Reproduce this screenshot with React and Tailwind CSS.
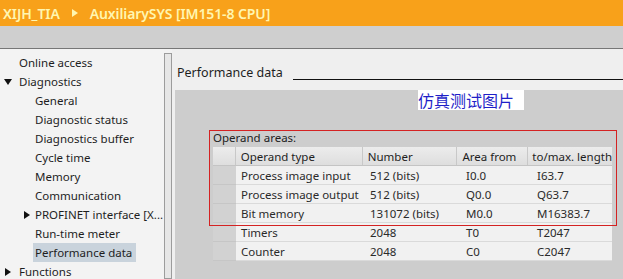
import React from "react";

const navItems = [
  { label: "Online access", level: 1 },
  { label: "Diagnostics", level: 1, arrow: "down" },
  { label: "General", level: 2 },
  { label: "Diagnostic status", level: 2 },
  { label: "Diagnostics buffer", level: 2 },
  { label: "Cycle time", level: 2 },
  { label: "Memory", level: 2 },
  { label: "Communication", level: 2 },
  { label: "PROFINET interface [X...", level: 2, arrow: "right" },
  { label: "Run-time meter", level: 2 },
  { label: "Performance data", level: 2, selected: true },
  { label: "Functions", level: 1, arrow: "right" },
];

const rows = [
  ["Process image input", "512 (bits)", "I0.0", "I63.7"],
  ["Process image output", "512 (bits)", "Q0.0", "Q63.7"],
  ["Bit memory", "131072 (bits)", "M0.0", "M16383.7"],
  ["Timers", "2048", "T0", "T2047"],
  ["Counter", "2048", "C0", "C2047"],
];

function Arrow({ dir }) {
  return (
    <svg width="8" height="8" viewBox="0 0 8 8" className="shrink-0">
      {dir === "down" ? (
        <polygon points="0,1 8,1 4,7" fill="#111" />
      ) : (
        <polygon points="1,0 7,4 1,8" fill="#111" />
      )}
    </svg>
  );
}

function NavItem({ item }) {
  const indent = item.level === 1 ? "pl-[19px]" : "pl-[35px]";
  return (
    <div className={`relative h-[19px] flex items-center ${indent}`}>
      {item.arrow && (
        <span
          className={`absolute top-[6px] ${item.level === 1 ? "left-[4px]" : "left-[23px]"}`}
        >
          <Arrow dir={item.arrow} />
        </span>
      )}
      <span
        className={`h-[19px] leading-[19px] whitespace-nowrap ${
          item.selected ? "bg-[#c9d3dc] pr-[4px] -ml-[2px] pl-[2px]" : ""
        }`}
      >
        {item.label}
      </span>
    </div>
  );
}

export default function App() {
  return (
    <div className="w-[623px] h-[279px] overflow-hidden flex flex-col bg-[#f2f2f2] text-[#1e1e1e] font-['Noto_Sans',sans-serif] text-[11.5px]">
      {/* breadcrumb bar */}
      <div className="h-[26px] shrink-0 bg-[#f8a11a] flex items-center pl-[3px] gap-[12px] text-[14px] font-semibold text-[#fff6b0] tracking-[-0.1px]">
        <span>XIJH_TIA</span>
        <svg width="6" height="8" viewBox="0 0 6 8">
          <polygon points="0,0 6,4 0,8" fill="#fff6b0" />
        </svg>
        <span>AuxiliarySYS [IM151-8 CPU]</span>
      </div>
      <div className="h-[23px] shrink-0 bg-[#cfcfcf] border-b border-[#777]" />

      <div className="flex flex-1 min-h-0">
        {/* left navigation */}
        <div className="w-[164px] shrink-0 pt-[4px] bg-[#f3f3f3]">
          {navItems.map((item) => (
            <NavItem key={item.label} item={item} />
          ))}
        </div>
        <div className="w-[8px] shrink-0 mt-[4px] border border-[#9c9c9c] bg-[#e6e6e6]" />

        {/* main panel */}
        <div className="flex-1 flex flex-col bg-[#efefef] min-w-0">
          <div className="h-[41px] shrink-0 flex pl-[5px] pt-[16px]">
            <span className="leading-[16px] text-[12.5px] whitespace-nowrap">Performance data</span>
            <div className="flex-1 h-px bg-[#111] mt-[14px] ml-[10px]" />
          </div>

          <div className="relative flex-1 ml-[3px] bg-[#cdcdcd] flex flex-col">
            <div className="ml-[243px] w-[106px] h-[20px] bg-white text-[#1f1fc8] text-[16px] leading-[20px] font-['Noto_Sans_CJK_SC',sans-serif]">
              仿真测试图片
            </div>

            <div className="mt-[19px] ml-[38px] h-[18px] leading-[18px] text-[#222]">
              Operand areas:
            </div>

            <div className="ml-[38px] w-[399px] text-[#2a2a2a]">
              <div className="flex h-[19px] bg-gradient-to-b from-[#ececec] to-[#dedede] border-b border-[#c4c4c4] text-[#1e1e1e] whitespace-nowrap">
                <div className="w-[23px] border-r border-[#c8c8c8]" />
                <div className="w-[129px] pl-[5px] leading-[19px] border-r border-[#c8c8c8]">Operand type</div>
                <div className="w-[96px] pl-[5px] leading-[19px] border-r border-[#c8c8c8]">Number</div>
                <div className="w-[72px] pl-[5px] leading-[19px] border-r border-[#c8c8c8]">Area from</div>
                <div className="flex-1 pl-[4px] leading-[19px]">to/max. length</div>
              </div>
              {rows.map((r) => (
                <div key={r[0]} className="flex h-[19px] whitespace-nowrap">
                  <div className="w-[23px] bg-[#d2d2d2] border-b border-[#c6c6c6]" />
                  <div className="flex-1 flex bg-[#f1f1f1] border-b border-[#dadada]">
                    <div className="w-[129px] pl-[5px] leading-[19px]">{r[0]}</div>
                    <div className="w-[96px] pl-[5px] leading-[19px]">{r[1]}</div>
                    <div className="w-[72px] pl-[5px] leading-[19px]">{r[2]}</div>
                    <div className="flex-1 pl-[4px] leading-[19px]">{r[3]}</div>
                  </div>
                </div>
              ))}
            </div>

            {/* red annotation frame */}
            <div className="absolute left-[34px] top-[40px] w-[408px] h-[96px] border border-[#d42222] pointer-events-none" />
          </div>
        </div>
      </div>
    </div>
  );
}
